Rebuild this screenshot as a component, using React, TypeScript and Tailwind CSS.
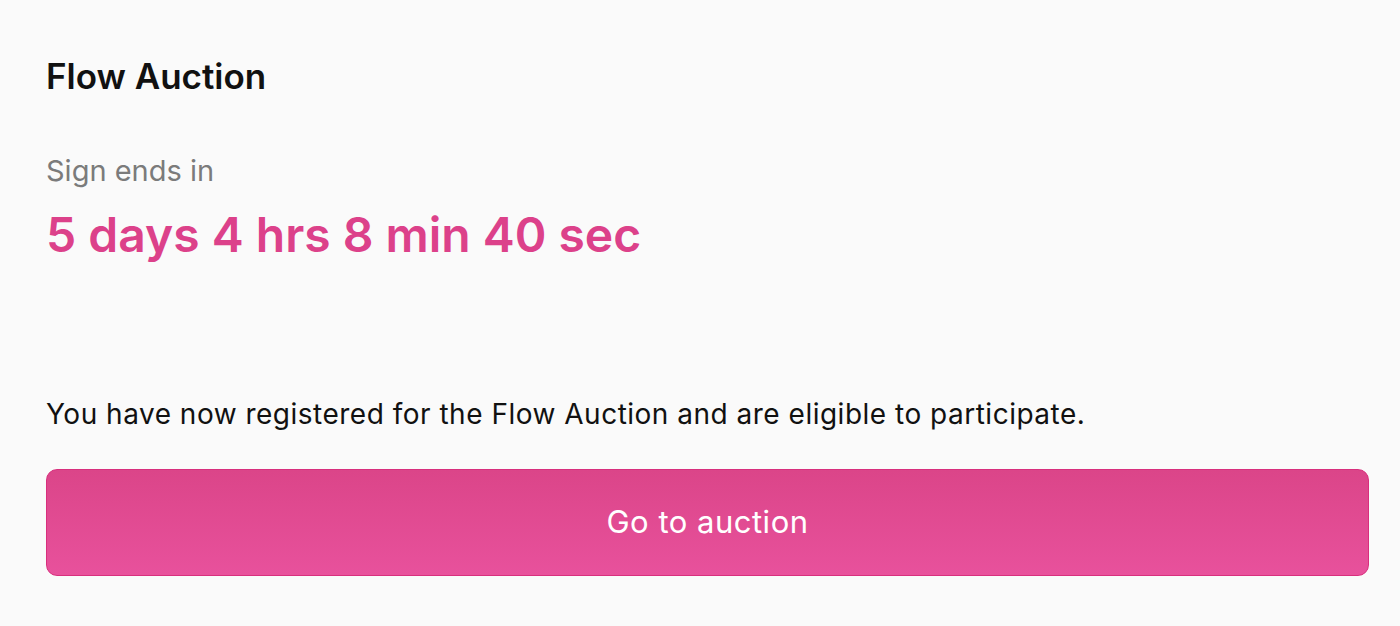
export default function App() {
  return (
    <div className="min-h-screen w-full bg-[#fafafa] pl-[46px] pr-[31px] pt-[56px] font-['Inter',sans-serif]">
      <h1 className="text-[35px] leading-[40px] font-semibold text-[#111111]">Flow Auction</h1>

      <div className="mt-[59px]">
        <p className="text-[29px] leading-[32px] text-[#7b7b7b]">Sign ends in</p>
        <p className="mt-[20px] text-[48px] leading-[56px] font-semibold text-[#dc418a]">
          5 days 4 hrs 8 min 40 sec
        </p>
      </div>

      <p className="mt-[133px] text-[28px] leading-[36px] tracking-[0.5px] text-[#111111]">
        You have now registered for the Flow Auction and are eligible to participate.
      </p>

      <button className="mt-[37px] flex h-[107px] w-full items-center justify-center rounded-[11px] border border-[#d82f7d] bg-gradient-to-b from-[#db4589] to-[#e8519c] text-[31px] tracking-[0.5px] text-white">
        Go to auction
      </button>
    </div>
  );
}
